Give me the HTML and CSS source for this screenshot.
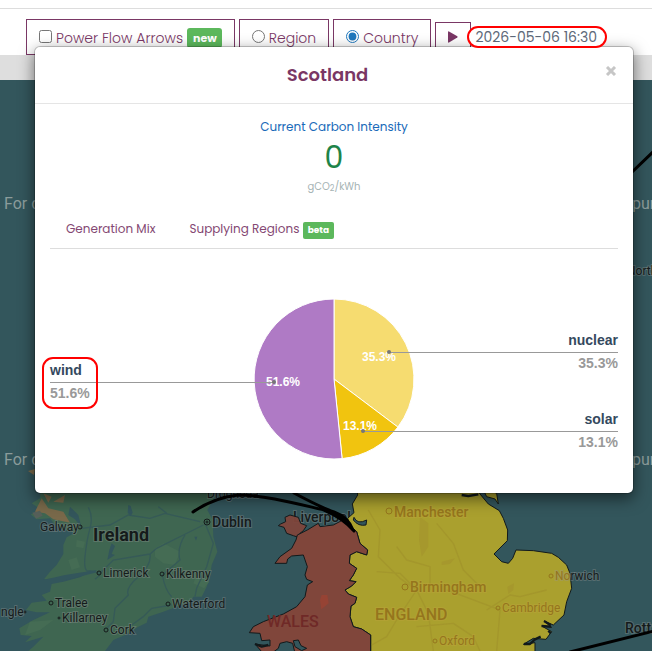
FILE: index.html
```
<!DOCTYPE html>
<html lang="en">
<head>
    <meta charset="UTF-8">
    <meta name="viewport" content="width=device-width, initial-scale=1">
    <title>Carbon Intensity - Scotland</title>
    <link rel="stylesheet" href="styles.css">
</head>
<body>
    <form class="toolbar">
        <label class="option"><input type="checkbox"> Power Flow Arrows <span class="badge">new</span></label>
        <label class="option"><input type="radio" name="area"> Region</label>
        <label class="option"><input type="radio" name="area" checked> Country</label>
        <button type="button" class="play" aria-label="Play">
            <svg width="10" height="12" viewBox="0 0 10 12"><path d="M0 1.2Q0 0 1 .5L9.3 5.3Q10 6 9.3 6.6L1 11.5Q0 12 0 10.8Z" fill="#7a3765"/></svg>
        </button>
        <input type="text" class="date" aria-label="Date" value="2026-05-06 16:30">
    </form>
    <div class="strip"></div>

    <main class="map">
        <svg viewBox="0 80 652 571" preserveAspectRatio="xMinYMin slice">
            <!-- Ireland -->
            <path fill="#79694a" d="M28 471L35 469 34 475Z"/>
            <g transform="translate(0 480) scale(.33333)">
                <path fill="#3f6651" d="M125 0L120 55 95 70 125 90 92 103 110 118 150 115 165 135 195 150 225 158 200 172 190 195 190 222 170 255 150 275 132 298 165 295 205 288 235 282 270 277 240 292 190 305 155 312 150 335 125 345 140 362 95 368 78 390 110 397 150 397 100 420 58 445 62 465 95 468 75 487 130 470 100 500 85 513 315 513 340 480 375 465 415 440 440 428 445 410 490 395 570 365 580 350 605 350 620 320 630 290 635 255 652 215 640 170 638 120 622 90 645 50 620 0Z"/>
                <path fill="#456c54" d="M205 240L230 232 240 262 215 270ZM230 180L255 185 250 205 228 200ZM465 205L490 190 540 215 525 255 490 250 465 230ZM590 285L628 305 612 325 580 310ZM90 425L160 420 120 450 75 465Z"/>
                <path fill="#79694a" d="M125 55L145 85 190 95 210 128 160 118 135 100 105 95ZM160 65L195 45 190 68ZM130 40L155 50 145 68Z"/>
                <path fill="#56605a" d="M97 98L120 92 128 107 108 116Z"/>
                <g fill="none" stroke="#365a58" stroke-width="4">
                    <path d="M265 82Q280 110 270 145T255 230 270 272L300 280 340 240 450 222 470 205 550 165 610 135"/>
                    <path d="M245 145L330 135 385 105 450 115 495 100 600 125M475 80L500 100M555 165Q530 205 540 240L487 285Q495 330 515 350M450 222Q455 255 415 290T385 345L345 385 340 425 320 445M285 298L300 285M515 375L455 385 430 410 395 435M615 130L640 190 620 260 590 325 585 350"/>
                </g>
                <path fill="#33565c" d="M385 75L392 78 398 98 392 108 383 98ZM335 190L345 198 335 222 345 225 322 240 328 210ZM210 80L235 105 245 145 225 118 205 105ZM583 170L592 170 588 182ZM130 300L195 285 290 270 285 278 200 300Z"/>
            </g>
            <g class="places">
                <text class="city" x="293" y="522">Liverpool</text>
            </g>
            <!-- Wales and England -->
            <g transform="translate(220 480) scale(.33333)" stroke="#11191b" stroke-width="3" stroke-linejoin="round">
                <path fill="#aaa02e" d="M410 20L413 45 397 72 402 98 383 115 390 138 410 155 420 190 443 210 440 225 410 215 390 225 388 250 410 265 400 285 388 302 408 305 395 318 375 330 385 342 410 352 405 370 393 378 390 410 400 440 425 447 452 465 452 520 945 520 945 488 910 493 940 475 978 478 995 455 965 438 995 442 972 423 1000 435 1032 405 1040 365 1055 325 1050 280 1040 255 1015 232 995 220 940 212 888 210 878 235 865 250 845 245 822 222 862 182 863 150 850 115 838 92 805 72 780 42 770 20Z"/>
                <path fill="#aaa02e" d="M785 20L800 50 825 57 835 72 830 40Z"/>
                <path fill="#80463b" fill-opacity=".95" d="M182 132L197 125 195 112 210 105 235 112 242 130 260 137 250 152 240 160 235 172 220 167 200 160 192 142 175 137Z"/>
                <path fill="#80463b" d="M228 180L232 165 262 150 295 130 300 140 340 135 365 122 385 135 410 155 420 190 443 210 440 225 410 215 390 225 388 250 410 265 400 285 388 302 408 305 395 318 375 330 385 342 410 352 405 370 393 378 390 410 400 440 425 447 452 465 452 520 225 520 218 490 200 485 180 490 175 505 155 520 125 515 105 492 150 498 150 480 125 482 120 460 88 458 100 440 130 425 190 402 230 380 255 350 262 315 278 305 260 298 255 285 262 260 250 225 215 228 203 237 200 250 165 250 180 230 215 205Z"/>
                <path fill="#33565c" d="M402 112Q412 135 440 120L438 135Q415 140 400 120ZM220 482L235 480 243 497 260 505 245 512 225 500Z"/>
                <path fill="none" stroke-width="7" d="M965 438L993 440M972 423L992 435M912 492L930 492 945 478 962 470M985 452L992 460M725 45L745 48 775 43M105 492L125 500 145 495"/>
                <path fill="#964334" stroke="none" d="M305 345L322 345 326 370 304 388 300 360Z"/>
                <path fill="#a6982d" stroke="none" d="M600 110L625 130 625 200 605 230 597 180ZM665 245L705 235 690 252 665 255ZM862 320L882 310 880 330 865 342Z"/>
                <g fill="none" stroke="#9e8d2a" stroke-width="4" opacity=".5">
                    <path d="M445 90L480 150 475 230 540 295 590 330 625 400 640 513M530 200L560 240 630 260 630 330M650 130L700 190 730 270 780 320M470 275L540 280 590 330 530 420 500 470 455 495M680 330L760 360 840 390 830 513M590 440L700 430 760 470 780 513M800 390L870 345 900 350 980 330"/>
                </g>
            </g>
            <g class="places">
                <circle cx="80" cy="527" r="2"/><text x="40" y="531">Galway</text>
                <circle cx="99" cy="573" r="2"/><text x="103" y="577">Limerick</text>
                <circle cx="162" cy="574" r="2"/><text x="166" y="578">Kilkenny</text>
                <circle cx="51" cy="603" r="2"/><text x="55" y="607">Tralee</text>
                <circle cx="59" cy="618" r="1"/><text x="62" y="622">Killarney</text>
                <circle cx="106" cy="630" r="2"/><text x="110" y="634">Cork</text>
                <circle cx="168" cy="604" r="2"/><text x="172" y="608">Waterford</text>
                <circle cx="25" cy="612" r="1"/><text x="1" y="616">ngle</text>
                <text x="207" y="498">Drogheda</text>
                <circle cx="207" cy="522" r="3"/><circle cx="207" cy="522" r="1"/>
                <text class="city" x="212" y="527">Dublin</text>
                <text class="country" x="93" y="541">Ireland</text>
                <text class="city" x="625" y="633">Rott</text>
                <text x="627" y="275">North</text>
                <text x="555" y="580"><tspan class="on-land">No</tspan>rwich</text>
            </g>
            <g class="places england">
                <circle cx="389" cy="511" r="3"/><text class="city" x="394" y="517">Manchester</text>
                <circle cx="405" cy="587" r="3"/><text class="city" x="410" y="592">Birmingham</text>
                <circle cx="551" cy="576" r="2"/>
                <circle cx="498" cy="608" r="2"/><text x="502" y="612">Cambridge</text>
                <circle cx="435" cy="641" r="2"/><text x="439" y="645">Oxford</text>
                <text class="region" x="375" y="620">ENGLAND</text>
            </g>
            <text class="region wales" x="267" y="627">WALES</text>
            <!-- interconnectors -->
            <g fill="none" stroke="#000" stroke-width="3" stroke-linecap="round">
                <path d="M193 512Q213 498 238 495C265 495 298 504 324 510Q343 518 354 531M294 493Q320 507 334 512T353 530M570 652L654 631M630 174L654 151"/>
            </g>
            <g class="notice">
                <text x="4" y="209">For d</text><text x="632" y="209">pur</text>
                <text x="4" y="465">For d</text><text x="632" y="465">pur</text>
            </g>
        </svg>
    </main>

    <section class="modal" role="dialog" aria-labelledby="modalTitle">
        <header class="modal-header">
            <h1 id="modalTitle">Scotland</h1>
            <button type="button" class="close" aria-label="Close">
                <svg width="12" height="10" viewBox="0 0 12 10"><path d="M2 1L10 9M10 1L2 9" stroke="#c6c6c6" stroke-width="3"/></svg>
            </button>
        </header>
        <div class="modal-body">
            <div class="intensity">
                <div class="intensity-title">Current Carbon Intensity</div>
                <div class="intensity-value">0</div>
                <div class="intensity-unit">gCO<sub>2</sub>/kWh</div>
            </div>
            <nav class="tabs">
                <a href="#mix">Generation Mix</a>
                <a href="#regions">Supplying Regions <span class="badge badge-small">beta</span></a>
            </nav>
            <svg class="chart" id="mix" viewBox="0 0 568 229">
                <g stroke="#fff" stroke-width="1">
                    <path fill="#f6dc70" d="M284 130V50A80 80 0 0 1 347.9 178.1Z"/>
                    <path fill="#f1c40f" d="M284 130L347.9 178.1A80 80 0 0 1 292.1 209.6Z"/>
                    <path fill="#af7ac5" d="M284 130L292.1 209.6A80 80 0 1 1 284 50Z"/>
                </g>
                <g class="slice-label">
                    <text x="329" y="112">35.3%</text>
                    <text x="310" y="181">13.1%</text>
                    <text x="233" y="137">51.6%</text>
                </g>
                <g class="leader">
                    <path d="M339 103H568M313 182H568M0 133H224"/>
                    <circle cx="339" cy="103" r="2"/>
                    <circle cx="313" cy="182" r="2"/>
                    <circle cx="224" cy="133" r="2"/>
                </g>
                <g class="legend">
                    <text x="0" y="126">wind</text>
                    <text class="percent" x="0" y="149">51.6%</text>
                    <g text-anchor="end">
                        <text x="568" y="96">nuclear</text>
                        <text class="percent" x="568" y="119">35.3%</text>
                        <text x="568" y="175">solar</text>
                        <text class="percent" x="568" y="198">13.1%</text>
                    </g>
                </g>
                <rect x="-7" y="109" width="54" height="50" rx="10" fill="none" stroke="#f00" stroke-width="2"/>
            </svg>
        </div>
    </section>
</body>
</html>
```
FILE: styles.css
```
* {
    box-sizing: border-box;
}

body {
    font-family: Poppins, Inter, sans-serif;
    margin: 0;
    min-height: 100vh;
    display: flex;
    flex-direction: column;
    position: relative;
    color: #7a3765;
    overflow: hidden;
}

.toolbar {
    display: flex;
    gap: 4px;
    margin-top: 8px;
    padding: 10px 26px 0;
    border-top: 1px solid #ddd;
    background: #fff;
}

.option {
    display: flex;
    align-items: center;
    height: 36px;
    padding: 2px 12px 0;
    border: 1px solid #7a3765;
    font-size: 14px;
    font-weight: 300;
    white-space: nowrap;
}

.option input {
    width: 13px;
    height: 13px;
    margin: 0 4px 3px 0;
    accent-color: #1f78bd;
}

.badge {
    margin-left: 4px;
    padding: 0 5px 0 6px;
    border-radius: 3px;
    background: #5cb85c;
    color: #fff;
    font-size: 11px;
    font-weight: 700;
    line-height: 20px;
}

.play {
    height: 33px;
    width: 36px;
    margin-top: 3px;
    padding: 0 0 4px;
    border: 1px solid #7a3765;
    background: #fff;
}

.play svg {
    vertical-align: middle;
}

.date {
    position: relative;
    z-index: 2;
    width: 140px;
    height: 22px;
    margin: 7px 0 0 -8px;
    padding: 0 6px;
    border: 2px solid #f00;
    border-radius: 11px;
    background: #fff;
    color: #5d6878;
    font-family: inherit;
    font-size: 14px;
}

.strip {
    height: 25px;
    background: #dedede;
}

.map {
    flex: 1;
    min-height: 571px;
    background: #33565c;
}

.map svg {
    display: block;
    width: 100%;
    height: 100%;
}

.places {
    fill: #151b1b;
    font: 12px Roboto, sans-serif;
}

.places text {
    paint-order: stroke;
    stroke: rgba(150, 150, 150, 0.35);
    stroke-width: 2px;
}

.places circle {
    fill: none;
    stroke: #151b1b;
}

.places .city {
    font-size: 14px;
    font-weight: 500;
}

.places .country {
    font-size: 18px;
    font-weight: 700;
}

.region {
    font: 500 16px Roboto, sans-serif;
}

.wales {
    fill: #6f2927;
}

.england,
.on-land {
    fill: #95751d;
}

.england text {
    stroke: rgba(190, 165, 60, 0.4);
}

.places.england circle {
    stroke: #95751d;
}

.notice {
    fill: #8b9c9b;
    font: 16px Roboto, sans-serif;
}

.modal {
    position: absolute;
    z-index: 1;
    top: 46px;
    left: 34px;
    right: 18px;
    border: 1px solid rgba(0, 0, 0, 0.2);
    border-radius: 6px;
    background: #fff;
    background-clip: padding-box;
    box-shadow: 0 5px 15px rgba(0, 0, 0, 0.5);
}

.modal-header {
    display: flex;
    align-items: flex-start;
    height: 57px;
    padding: 0 16px 0 15px;
    border-bottom: 1px solid #e5e5e5;
}

.modal-header h1 {
    flex: 1;
    margin: 0;
    font-size: 18px;
    font-weight: 600;
    line-height: 56px;
    text-align: center;
}

.close {
    margin-top: 19px;
    padding: 0;
    border: 0;
    background: none;
    line-height: 10px;
}

.modal-body {
    padding: 13px 15px 15px;
}

.intensity {
    text-align: center;
}

.intensity-title {
    color: #196ab9;
    font-size: 12px;
    line-height: 20px;
}

.intensity-value {
    color: #1e8449;
    font-size: 30px;
    line-height: 41px;
}

.intensity-unit {
    color: #a5b3b4;
    font-size: 10px;
    line-height: 18px;
}

.intensity-unit sub {
    font-size: 8px;
    line-height: 0;
    vertical-align: -1px;
}

.tabs {
    display: flex;
    gap: 34px;
    margin-top: 16px;
    padding: 0 16px;
    height: 37px;
    border-bottom: 1px solid #ddd;
}

.tabs a {
    color: #844873;
    font-size: 12px;
    line-height: 34px;
    text-decoration: none;
}

.badge-small {
    display: inline-block;
    margin-left: 0;
    padding: 0 5px;
    border-radius: 2px;
    font-size: 9px;
    line-height: 17px;
}

.chart {
    display: block;
    width: 100%;
    overflow: visible;
    font: bold 14px "Liberation Sans", Arial, sans-serif;
}

.slice-label {
    fill: #fff;
    font-size: 12px;
    text-anchor: middle;
}

.leader {
    fill: #777;
}

.leader path {
    fill: none;
    stroke: #999;
    shape-rendering: crispEdges;
}

.legend {
    fill: #34495e;
}

.legend .percent {
    fill: #999;
}
```
